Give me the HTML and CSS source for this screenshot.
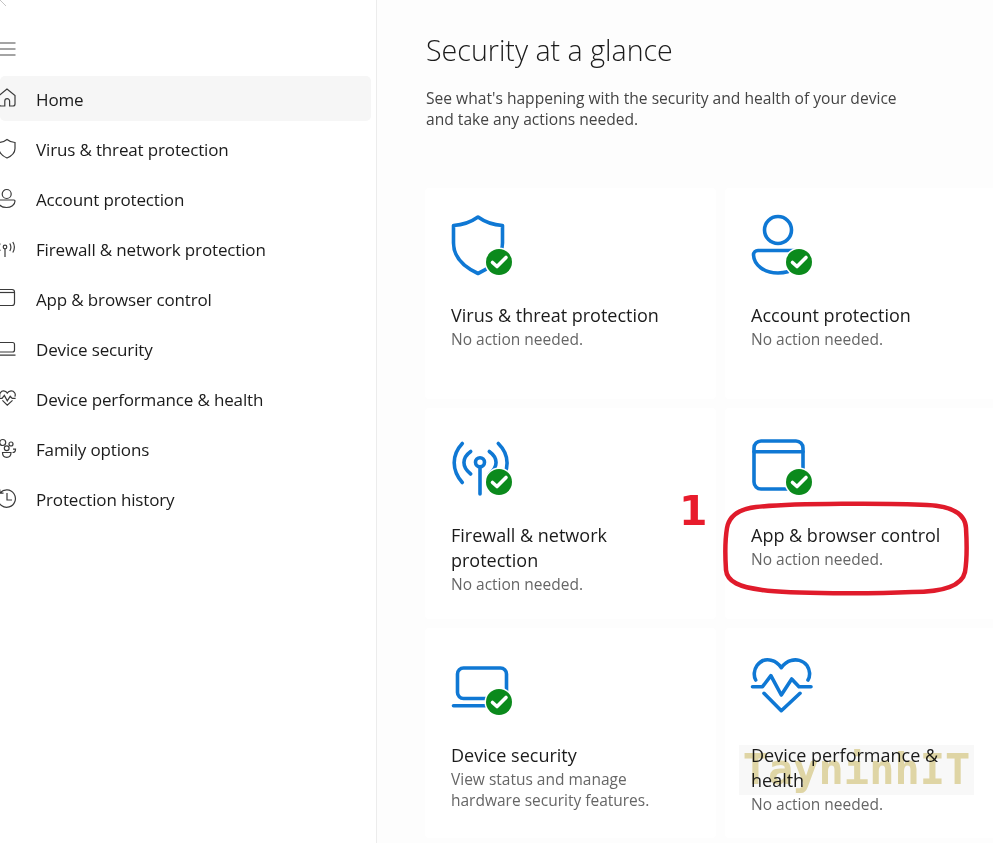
FILE: index.html
```html
<!DOCTYPE html>
<html lang="en">
<head>
    <meta charset="UTF-8">
    <meta name="viewport" content="width=device-width, initial-scale=1.0">
    <title>Windows Security</title>
    <link rel="stylesheet" href="styles.css">
</head>
<body>
    <svg class="defs" width="0" height="0">
        <symbol id="badge" viewBox="0 0 60 60" overflow="visible">
            <circle class="badge-halo" cx="48" cy="47" r="14.500"/>
            <circle class="badge-disc" cx="48" cy="47" r="13"/>
            <path class="badge-check" d="M41.500 47.500l4.500 4 9-9"/>
        </symbol>
    </svg>

    <div class="page">
        <aside class="sidebar">
            <svg class="back-mark" width="8" height="8" viewBox="0 0 8 8"><path d="M0 0l6 6"/></svg>
            <svg class="menu-icon" width="16" height="14" viewBox="0 0 16 14"><path d="M0 1h15.500M0 7h15.500M0 13h15.500"/></svg>
            <nav class="nav">
                <a class="nav-item active">
                    <svg class="nav-icon" viewBox="0 0 22 22"><path d="M12 1L4 7.500V16a2 2 0 0 0 2 2h3.800v-5a2.400 2.400 0 0 1 4.800 0v5H18a2 2 0 0 0 2-2V7.500z"/></svg>
                    <span>Home</span>
                </a>
                <a class="nav-item">
                    <svg class="nav-icon" viewBox="0 0 22 22"><path d="M12 1.500C9.500 3.500 7 4.500 4 4.500v6C4 15 7.500 18 12 20c4.500-2 8-5 8-9.500v-6c-3 0-5.500-1-8-3z"/></svg>
                    <span>Virus &amp; threat protection</span>
                </a>
                <a class="nav-item">
                    <svg class="nav-icon" viewBox="0 0 22 22"><circle cx="11.700" cy="6" r="4.500"/><path d="M3 12h16a1 1 0 0 1 1 1c0 4-4 6.500-8.500 6.500S4 17.500 3 14z"/></svg>
                    <span>Account protection</span>
                </a>
                <a class="nav-item">
                    <svg class="nav-icon" viewBox="0 0 22 22"><circle cx="10" cy="9" r="1.800"/><path d="M10 11v8M14.800 5.500q2.200 3.800 0 7.500M17.800 4q3.200 5 0 10.500M5.200 5.500q-2.200 3.800 0 7.500"/></svg>
                    <span>Firewall &amp; network protection</span>
                </a>
                <a class="nav-item">
                    <svg class="nav-icon" viewBox="0 0 22 22"><rect x="2" y="1.500" width="17.500" height="16" rx="2.500"/><path d="M2 4.500h17.500"/></svg>
                    <span>App &amp; browser control</span>
                </a>
                <a class="nav-item">
                    <svg class="nav-icon" viewBox="0 0 22 22"><path d="M2 4.500h15.500a2 2 0 0 1 2 2v5.500a2 2 0 0 1-2 2H2M2 17.200h18.500"/></svg>
                    <span>Device security</span>
                </a>
                <a class="nav-item">
                    <svg class="nav-icon" viewBox="0 0 22 22"><g transform="translate(3.800 1.600) scale(.28)" stroke-width="4.300"><path d="M4.700 25C2.500 21 2.800 15 6 10.500 10 5 16 4 21 5.500c4 1 7 4 9.300 7.200C32.700 9.500 36 6.500 40 5.500 45 4 52 5 56 10.500c3 4.500 3.500 10.500 1 14.500M1.500 31.700h10l8.400-11 10.400 19.300L40.700 24 48 31.700h12M13 38.300l17.300 17.400L49 38.300"/></g></svg>
                    <span>Device performance &amp; health</span>
                </a>
                <a class="nav-item">
                    <svg class="nav-icon" viewBox="0 0 22 22"><circle cx="7.700" cy="4.500" r="3"/><circle cx="16" cy="6" r="2"/><circle cx="11.700" cy="10.300" r="2.400"/><path d="M7.500 14.500h8.500c0 2.800-1.800 4.800-4.300 4.800s-4.200-2-4.200-4.800zM18 11.200h2.500c0 2-1 3.300-3 3.300"/></svg>
                    <span>Family options</span>
                </a>
                <a class="nav-item">
                    <svg class="nav-icon" viewBox="0 0 22 22"><path d="M5 5a8.700 8.700 0 1 1-2 5.500M12 5v7h5M4.800 1.500V5.200h3.700"/></svg>
                    <span>Protection history</span>
                </a>
            </nav>
        </aside>

        <main class="content">
            <h1 class="page-title">Security at a glance</h1>
            <p class="page-intro">See what's happening with the security and health of your device and take any actions needed.</p>

            <div class="cards">
                <div class="card">
                    <svg class="card-icon" viewBox="0 0 60 60">
                        <path d="M27 2C20 7 11 10 2.500 10.500V28C2.500 42 13 52 27 58.500 41 52 51.500 42 51.500 28V10.500C43 10 34 7 27 2z"/>
                        <use href="#badge" width="60" height="60"/>
                    </svg>
                    <h3 class="card-title">Virus &amp; threat protection</h3>
                    <p class="card-status">No action needed.</p>
                </div>
                <div class="card">
                    <svg class="card-icon" viewBox="0 0 60 60">
                        <circle cx="27" cy="15" r="13.500"/>
                        <path d="M50 35.500H7a4.500 4.500 0 0 0-4.500 4.500C3 50 13 58 27 58c14 0 24-8 24-18"/>
                        <use href="#badge" width="60" height="60"/>
                    </svg>
                    <h3 class="card-title">Account protection</h3>
                    <p class="card-status">No action needed.</p>
                </div>
                <div class="card">
                    <svg class="card-icon" viewBox="0 0 60 60">
                        <circle cx="29" cy="27.300" r="4.500"/>
                        <path d="M29 32v27M11.300 47.500C.5 35 .5 20 11.300 8.500M19.700 39c-9-7-9-16 0-22.500M38.300 16.500c9 6.500 9 15.500 0 22.500M47.300 8.500C59 20 59 36 47.300 47.500"/>
                        <use href="#badge" width="60" height="60"/>
                    </svg>
                    <h3 class="card-title">Firewall &amp; network protection</h3>
                    <p class="card-status">No action needed.</p>
                </div>
                <div class="card">
                    <svg class="card-icon" viewBox="0 0 60 60">
                        <rect x="3" y="6" width="49" height="48" rx="7"/>
                        <path d="M3 16.700h49"/>
                        <use href="#badge" width="60" height="60"/>
                    </svg>
                    <h3 class="card-title">App &amp; browser control</h3>
                    <p class="card-status">No action needed.</p>
                </div>
                <div class="card">
                    <svg class="card-icon" viewBox="0 0 60 60">
                        <rect x="6.500" y="13" width="49" height="30.500" rx="6"/>
                        <path d="M2.500 50.700H50"/>
                        <use href="#badge" width="60" height="60"/>
                    </svg>
                    <h3 class="card-title">Device security</h3>
                    <p class="card-status wrap">View status and manage hardware security features.</p>
                </div>
                <div class="card">
                    <svg class="card-icon" viewBox="0 0 60 60">
                        <path d="M4.700 25C2.500 21 2.800 15 6 10.500 10 5 16 4 21 5.500c4 1 7 4 9.300 7.200C32.700 9.500 36 6.500 40 5.500 45 4 52 5 56 10.500c3 4.500 3.500 10.500 1 14.500M1.500 31.700h10l8.400-11 10.400 19.300L40.700 24 48 31.700h12M13 38.300l17.300 17.400L49 38.300"/>
                    </svg>
                    <h3 class="card-title">Device performance &amp; health</h3>
                    <p class="card-status">No action needed.</p>
                </div>
            </div>
        </main>

        <!-- red markup drawn on top of the screenshot -->
        <div class="step-number">1</div>
        <svg class="step-ring" width="250" height="98" viewBox="0 0 250 98">
            <path d="M34 7C70 3 170 3 205 5c23 1 38 7 39 23 1 17 1 32-1 44-3 14-23 20-53 20-40 2-120 2-150-2-22-3-35-8-36-20-1-15-1-30 1-42 2-12 13-19 29-21z"/>
        </svg>
        <div class="watermark">TayninhIT</div>
    </div>
</body>
</html>
```

FILE: styles.css
```css
body {
    margin: 0;
    font-family: "Open Sans", "Noto Sans", sans-serif;
    color: #1b1b1b;
    background: #fff;
}
.defs {
    position: absolute;
}
.page {
    position: relative;
    display: flex;
    height: 843px;
    overflow: hidden;
}

/* sidebar */
.sidebar {
    flex: 0 0 376px;
    border-right: 1px solid #ececec;
    position: relative;
}
.back-mark {
    position: absolute;
    left: 0;
    top: 0;
}
.back-mark path {
    fill: none;
    stroke: #c4c4c4;
    stroke-width: 1;
}
.menu-icon {
    display: block;
    margin-top: 42px;
}
.menu-icon path {
    fill: none;
    stroke: #4a4a4a;
    stroke-width: 1.100;
}
.nav {
    display: flex;
    flex-direction: column;
    gap: 5px;
    margin-top: 20px;
    margin-right: 5px;
}
.nav-item {
    display: flex;
    align-items: center;
    height: 45px;
    border-radius: 5px;
    font-size: 17px;
    letter-spacing: -0.15px;
}
.nav-item span {
    padding-top: 2px;
}
.nav-item.active {
    background: #f6f6f6;
}
.nav-icon {
    flex: 0 0 22px;
    width: 22px;
    height: 22px;
    margin-left: -5px;
    margin-right: 19px;
    fill: none;
    stroke: #3a3a3a;
    stroke-width: 1.200;
}

/* main area */
.content {
    flex: 1;
    min-width: 0;
    padding-left: 49px;
    background: #fdfdfd;
}
.page-title {
    margin: 30px 0 0;
    font-size: 28.600px;
    line-height: 40px;
    font-weight: 300;
}
.page-intro {
    width: 490px;
    margin: 18px 0 0;
    font-size: 15.600px;
    line-height: 21px;
    color: #444;
}
.cards {
    display: grid;
    grid-template-columns: 291px 291px;
    grid-template-rows: 211px 211px 210px;
    gap: 9px;
    margin-top: 58px;
    margin-left: -1px;
}
.card {
    padding: 27px 0 0 26px;
    background: #fff;
    border-radius: 4px;
}
.card-icon {
    display: block;
    width: 60px;
    height: 60px;
    fill: none;
    stroke: #0f78d4;
    stroke-width: 3.600;
    stroke-linecap: round;
    stroke-linejoin: round;
    overflow: visible;
}
.badge-halo {
    fill: #fff;
    stroke: none;
}
.badge-disc {
    fill: #0b8a1c;
    stroke: none;
}
.badge-check {
    fill: none;
    stroke: #fff;
    stroke-width: 3.600;
}
.card-title {
    max-width: 225px;
    margin: 28px 0 0;
    font-size: 18px;
    line-height: 25px;
    font-weight: 400;
}
.card-status {
    margin: 0;
    font-size: 15.500px;
    line-height: 22px;
    color: #666;
}
.card-status.wrap {
    max-width: 215px;
    margin-top: 1px;
    line-height: 21px;
}

/* annotations over the screenshot */
.step-number {
    position: absolute;
    left: 679px;
    top: 486px;
    font-family: "DejaVu Sans", sans-serif;
    font-weight: 700;
    font-size: 41px;
    line-height: 50px;
    color: #e81c2c;
}
.step-ring {
    position: absolute;
    left: 722px;
    top: 500px;
}
.step-ring path {
    fill: none;
    stroke: #e01b2b;
    stroke-width: 4.500;
}
.watermark {
    position: absolute;
    left: 739px;
    top: 745px;
    width: 235px;
    height: 50px;
    text-align: center;
    font-family: "DejaVu Sans Mono", monospace;
    font-weight: 700;
    font-size: 42px;
    line-height: 50px;
    color: #dfd5a5;
    background: #f8f8f8;
    mix-blend-mode: multiply;
}
```
